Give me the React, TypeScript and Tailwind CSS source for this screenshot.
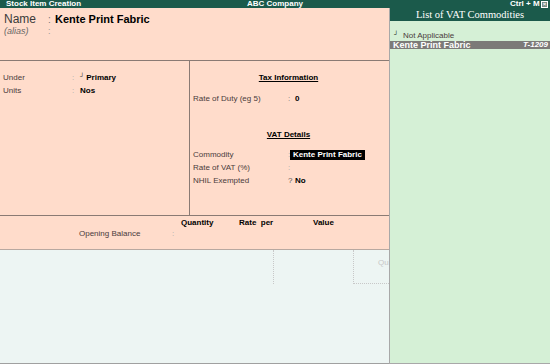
export default function App() {
  return (
    <div className="w-[550px] h-[364px] flex flex-col overflow-hidden font-['Liberation_Sans',Arial,sans-serif] text-[#222]">
      {/* title bar */}
      <div className="h-[8px] bg-[#1b5a4b] flex items-center text-white text-[8px] font-bold leading-[8px]">
        <span className="w-[247px] pl-[6px]">Stock Item Creation</span>
        <span className="w-[263px]">ABC Company</span>
        <span className="w-[31px]">Ctrl + M</span>
        <span className="w-[7px] h-[7px] border border-white bg-[#7a8c85] text-[6px] leading-[5px] text-center">×</span>
      </div>

      <div className="flex flex-1">
        {/* main form */}
        <div className="w-[389px] flex flex-col">
          <div className="h-[53px] bg-[#ffdccb] pl-[4px] pt-[4px] border-b border-[#8a7a74]">
            <div className="flex items-center h-[14px]">
              <span className="w-[44px] text-[12px] text-[#3a3a3a]">Name</span>
              <span className="w-[7px] text-[10px] text-[#777]">:</span>
              <span className="text-[11px] font-bold text-black">Kente Print Fabric</span>
            </div>
            <div className="flex items-center h-[11px]">
              <span className="w-[44px] text-[9px] italic text-[#666]">(alias)</span>
              <span className="text-[9px] text-[#999]">:</span>
            </div>
          </div>

          <div className="h-[155px] bg-[#ffdccb] flex border-b border-[#8a7a74]">
            <div className="w-[190px] border-r border-[#8a7a74] pl-[3px] pt-[10px] text-[8px]">
              <div className="flex items-center h-[13px]">
                <span className="w-[69px] text-[#4a3b3b]">Under</span>
                <span className="w-[8px] text-[#aaa]">:</span>
                <span className="text-[6px] mr-[2px] -mt-[3px]">┘</span>
                <span className="font-bold text-black">Primary</span>
              </div>
              <div className="flex items-center h-[13px]">
                <span className="w-[69px] text-[#4a3b3b]">Units</span>
                <span className="w-[8px] text-[#aaa]">:</span>
                <span className="font-bold text-black">Nos</span>
              </div>
            </div>
            <div className="flex-1 text-[8px] pl-[3px] pt-[10px]">
              <div className="h-[13px] flex justify-center items-center pr-[5px]">
                <span className="font-bold underline text-black">Tax Information</span>
              </div>
              <div className="flex items-center h-[13px] mt-[8px]">
                <span className="w-[95px] text-[#4a3b3b]">Rate of Duty (eg 5)</span>
                <span className="w-[7px] text-[#777]">:</span>
                <span className="font-bold text-black">0</span>
              </div>
              <div className="h-[13px] flex justify-center items-center pr-[5px] mt-[23px]">
                <span className="font-bold underline text-black">VAT Details</span>
              </div>
              <div className="flex items-center h-[12px] mt-[8px]">
                <span className="w-[95px] text-[#4a3b3b]">Commodity</span>
                <span className="w-[2px] text-[#aaa]">:</span>
                <span className="font-bold text-white bg-black px-[3px] leading-[10px]">Kente Print Fabric</span>
              </div>
              <div className="flex items-center h-[13px]">
                <span className="w-[95px] text-[#4a3b3b]">Rate of VAT (%)</span>
                <span className="text-[#aaa]">:</span>
              </div>
              <div className="flex items-center h-[13px]">
                <span className="w-[95px] text-[#4a3b3b]">NHIL Exempted</span>
                <span className="w-[7px] text-[#555]">?</span>
                <span className="font-bold text-black">No</span>
              </div>
            </div>
          </div>

          <div className="h-[34px] bg-[#ffdccb] border-b border-[#b8a8a0] text-[8px] pt-[2px]">
            <div className="flex h-[10px] items-center font-bold text-black">
              <span className="w-[181px]" />
              <span className="w-[58px]">Quantity</span>
              <span className="w-[74px]">Rate&nbsp; per</span>
              <span>Value</span>
            </div>
            <div className="flex h-[12px] items-center pl-[79px]">
              <span className="w-[93px] text-[#4a3b3b]">Opening Balance</span>
              <span className="text-[#aaa]">:</span>
            </div>
          </div>

          <div className="flex-1 bg-[#edf5f3] flex border-b border-[#a0a0a0]">
            <div className="w-[274px] border-r border-dotted border-[#c8c8c8] h-[34px]" />
            <div className="w-[80px] border-r border-dotted border-[#c8c8c8] h-[34px]" />
            <div className="flex-1 h-[34px] border-b border-dotted border-[#c8c8c8] pl-[24px] pt-[7px] text-[8px] text-[#c8c8c8]">Qu</div>
          </div>
        </div>

        {/* right list panel */}
        <div className="w-[161px] border-l border-[#a8a8a8] bg-[#d5f0d6] flex flex-col border-b">
          <div className="h-[13px] bg-[#1b5a4b] text-white text-[10.5px] leading-[13px] text-center font-['Liberation_Serif',serif]">
            List of VAT Commodities
          </div>
          <div className="mt-[10px] flex items-center h-[9px] pl-[4px] text-[8px] text-[#4a3b3b]">
            <span className="text-[6px] w-[9px] -mt-[3px] text-black">┘</span>
            <span>Not Applicable</span>
          </div>
          <div className="mt-[1px] h-[8px] bg-[#7c7a78] text-white text-[9px] leading-[8px] font-bold flex justify-between pl-[3px] pr-[2px]">
            <span>Kente Print Fabric</span>
            <span className="italic text-[8px]">T-1209</span>
          </div>
        </div>
      </div>
    </div>
  );
}
